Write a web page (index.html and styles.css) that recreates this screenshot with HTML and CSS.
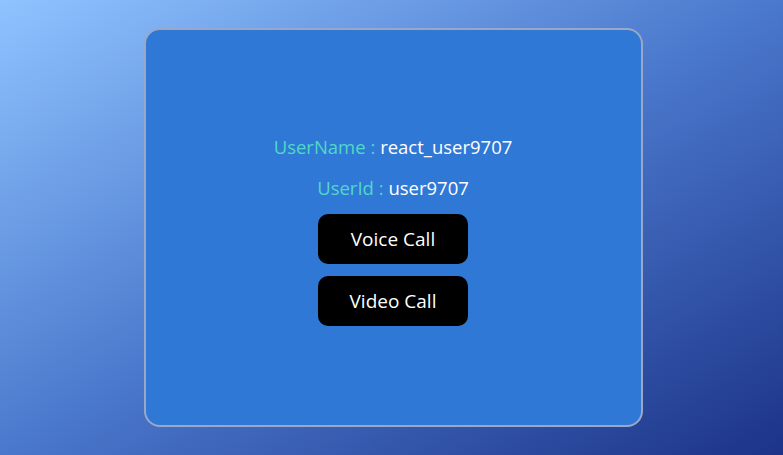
FILE: index.html
```html
<!DOCTYPE html>
<html>
<head>
<meta charset="utf-8">
<link rel="stylesheet" href="styles.css">
</head>
<body>
<div class="page">
  <div class="card">
    <p class="info"><span class="label">UserName :</span> <span class="value">react_user9707</span></p>
    <p class="info second"><span class="label">UserId :</span> <span class="value">user9707</span></p>
    <button class="btn voice">Voice Call</button>
    <button class="btn">Video Call</button>
  </div>
</div>
</body>
</html>
```
FILE: styles.css
```css
html, body {
  margin: 0;
  padding: 0;
  height: 455px;
  overflow: hidden;
}
body {
  background: linear-gradient(to bottom right, #8fc3ff 0%, #4a78cc 50%, #1c3388 100%);
  font-family: "Open Sans", "Noto Sans", sans-serif;
}
.page {
  display: flex;
  justify-content: center;
  padding-top: 28px;
  padding-left: 3px;
}
.card {
  box-sizing: border-box;
  width: 499px;
  height: 399px;
  border: 2px solid #9aa8c6;
  border-radius: 16px;
  background: #2f78d6;
  display: flex;
  flex-direction: column;
  align-items: center;
  padding-top: 105px;
}
.info {
  margin: 0;
  height: 24px;
  line-height: 24px;
  font-size: 18.5px;
  color: #ffffff;
}
.second {
  margin-top: 17px;
  margin-bottom: 14px;
}
.label {
  color: #4fd8c6;
}
.btn {
  width: 150px;
  height: 50px;
  border: none;
  border-radius: 10px;
  background: #000;
  color: #fff;
  font-family: "Open Sans", "Noto Sans", sans-serif;
  font-size: 19px;
  padding: 0;
}
.voice {
  margin-bottom: 12px;
}
```
